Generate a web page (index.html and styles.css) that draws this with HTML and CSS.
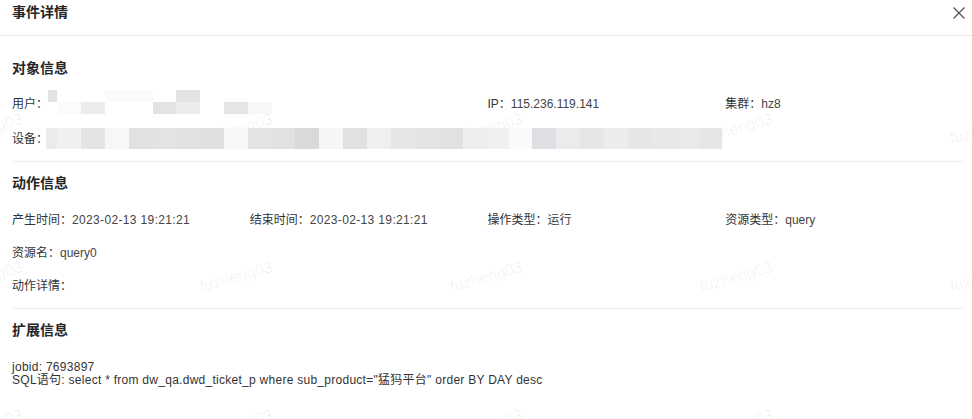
FILE: index.html
```html
<!DOCTYPE html>
<html lang="zh-CN">
<head>
<meta charset="utf-8">
<title>事件详情</title>
<link rel="stylesheet" href="styles.css">
</head>
<body>
<div class="page">
  <div class="watermarks" aria-hidden="true">
    <span class="wm" style="left:-51px;top:120px">fuzheng03</span>
    <span class="wm" style="left:199px;top:120px">fuzheng03</span>
    <span class="wm" style="left:449px;top:120px">fuzheng03</span>
    <span class="wm" style="left:699px;top:120px">fuzheng03</span>
    <span class="wm" style="left:949px;top:120px">fuzheng03</span>
    <span class="wm" style="left:-51px;top:268px">fuzheng03</span>
    <span class="wm" style="left:199px;top:268px">fuzheng03</span>
    <span class="wm" style="left:449px;top:268px">fuzheng03</span>
    <span class="wm" style="left:699px;top:268px">fuzheng03</span>
    <span class="wm" style="left:949px;top:268px">fuzheng03</span>
    <span class="wm" style="left:-51px;top:416px">fuzheng03</span>
    <span class="wm" style="left:199px;top:416px">fuzheng03</span>
    <span class="wm" style="left:449px;top:416px">fuzheng03</span>
    <span class="wm" style="left:699px;top:416px">fuzheng03</span>
    <span class="wm" style="left:949px;top:416px">fuzheng03</span>
  </div>

  <header class="header">
    <h1 class="title">事件详情</h1>
    <button class="close" aria-label="关闭">
      <svg width="12" height="12" viewBox="0 0 12 12"><path d="M0.5 0.5L11.5 11.5M11.5 0.5L0.5 11.5" stroke="#555" stroke-width="1.3" fill="none"/></svg>
    </button>
  </header>

  <section class="section first">
    <h2 class="sec-title">对象信息</h2>
    <div class="grid row-user">
      <div class="field span2"><span class="label">用户：</span><span class="mosaic mosaic-user"></span></div>
      <div class="field"><span class="label">IP：</span><span class="value">115.236.119.141</span></div>
      <div class="field"><span class="label">集群：</span><span class="value">hz8</span></div>
    </div>
    <div class="row-device">
      <span class="label">设备：</span><span class="mosaic mosaic-device"></span>
    </div>
  </section>

  <section class="section">
    <h2 class="sec-title">动作信息</h2>
    <div class="rows">
      <div class="grid">
        <div class="field"><span class="label">产生时间：</span><span class="value date">2023-02-13 19:21:21</span></div>
        <div class="field"><span class="label">结束时间：</span><span class="value date">2023-02-13 19:21:21</span></div>
        <div class="field"><span class="label">操作类型：</span><span class="value">运行</span></div>
        <div class="field"><span class="label">资源类型：</span><span class="value">query</span></div>
      </div>
      <div class="field"><span class="label">资源名：</span><span class="value">query0</span></div>
      <div class="field"><span class="label">动作详情：</span></div>
    </div>
  </section>

  <section class="section last">
    <h2 class="sec-title">扩展信息</h2>
    <div class="ext">jobid: 7693897<br>SQL语句: select * from dw_qa.dwd_ticket_p where sub_product="猛犸平台" order BY DAY desc</div>
  </section>
</div>
</body>
</html>
```

FILE: styles.css
```css
* { box-sizing: border-box; }
html, body { margin: 0; padding: 0; background: #fff; }
body {
  font-family: "Liberation Sans", "Noto Sans CJK SC", sans-serif;
  color: #333;
  font-size: 12px;
}
.page {
  position: relative;
  width: 972px;
  height: 419px;
  overflow: hidden;
}
.watermarks {
  position: absolute;
  inset: 0;
  pointer-events: none;
  z-index: 0;
}
.wm {
  position: absolute;
  font-family: "Liberation Sans", sans-serif;
  font-size: 16px;
  line-height: 18px;
  color: rgba(0, 0, 0, 0.06);
  white-space: nowrap;
  transform: rotate(-16deg);
  transform-origin: center center;
}
.header, .section { position: relative; z-index: 1; }
.header {
  height: 36px;
  display: flex;
  justify-content: space-between;
  align-items: flex-start;
  padding: 2px 7px 0 12px;
  border-bottom: 1px solid #e8e8e8;
}
.title {
  margin: 0;
  font-size: 14px;
  line-height: 20px;
  font-weight: 600;
  color: #262626;
}
.close {
  border: 0;
  background: transparent;
  padding: 0;
  margin-top: 5px;
  width: 12px;
  height: 12px;
  display: block;
}
.close svg { display: block; }
.section {
  margin: 0 9px 0 12px;
  padding: 11px 0 12px;
  border-bottom: 1px solid #eeeeee;
}
.section.first { padding-top: 22px; }
.section.last { border-bottom: 0; }
.sec-title {
  margin: 0;
  font-size: 14px;
  line-height: 20px;
  font-weight: 600;
  color: #262626;
}
.grid {
  display: grid;
  grid-template-columns: repeat(4, 1fr);
}
.span2 { grid-column: span 2; }
.field {
  display: flex;
  align-items: flex-end;
  line-height: 20px;
  white-space: nowrap;
}
.label { color: #333; }
.value { color: #444; }
.value.date { letter-spacing: 0.35px; }
.row-user { margin-top: 12px; align-items: end; }
.row-device {
  margin-top: 14px;
  display: flex;
  align-items: center;
  line-height: 20px;
}
.mosaic { display: block; }
.mosaic-user {
  width: 224px;
  height: 24px;
  background:
    linear-gradient(to right, #e3e3e3 0 9px, transparent 9px 57px, #fafafa 57px 105px, transparent 105px 128px, #e4e4e6 128px 152px, transparent 152px) top / 100% 12px no-repeat,
    linear-gradient(to right, transparent 0 9px, #fbfbfb 9px 33px, #ececee 33px 57px, transparent 57px 105px, #e3e3e5 105px 128px, #ececee 128px 152px, transparent 152px 176px, #e5e5e7 176px 200px, #f7f7f7 200px 224px) bottom / 100% 12px no-repeat;
}
.mosaic-device {
  width: 676px;
  height: 21px;
  margin-left: -2px;
  background: linear-gradient(to right,
    #ebebeb 0 11px, #f0f0f0 11px 35px, #e4e4e6 35px 59px, #f7f7f7 59px 83px,
    #e1e1e3 83px 107px, #e3e3e5 107px 130px, #e1e1e3 130px 154px, #dfdfe1 154px 178px,
    #f7f7f7 178px 202px, #e3e3e5 202px 226px, #e1e1e3 226px 249px, #d9d9db 249px 273px,
    #f6f6f6 273px 297px, #e1e1e3 297px 321px, #f0f0f0 321px 345px, #e6e6e8 345px 369px,
    #e4e4e6 369px 393px, #e1e1e3 393px 417px, #eeeeee 417px 441px, #efeff1 441px 463px,
    #fafafa 463px 486px, #dfdfe3 486px 510px, #ebebed 510px 534px, #e6e6e8 534px 558px,
    #ececee 558px 582px, #e6e6e8 582px 606px, #e8e8ea 606px 630px, #e9e9eb 630px 654px,
    #e6e6e8 654px 676px);
}
.rows {
  margin-top: 17px;
  display: flex;
  flex-direction: column;
  gap: 13px;
}
.ext {
  margin-top: 21px;
  font-size: 12px;
  line-height: 13px;
  color: #333;
  letter-spacing: 0.27px;
}
```
